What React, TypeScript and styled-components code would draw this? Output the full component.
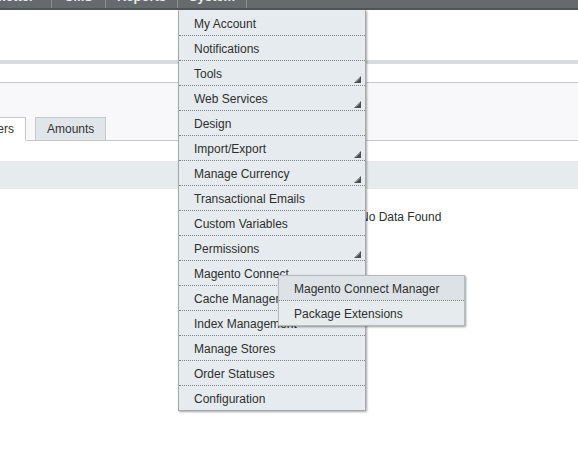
import React from "react";
import styled, { createGlobalStyle } from "styled-components";

const GlobalStyle = createGlobalStyle`
  html, body {
    margin: 0;
    padding: 0;
    background: #ffffff;
  }
  body {
    font-family: "Liberation Sans", Arial, sans-serif;
    font-size: 12px;
    color: #2f2f2f;
    overflow: hidden;
  }
`;

const Page = styled.div`
  position: relative;
  width: 578px;
  height: 461px;
  overflow: hidden;
`;

// Top navigation, scrolled so only the bottom of the labels shows
const NavBar = styled.div`
  display: flex;
  height: 8px;
  background: #656b6c;
  border-bottom: 2px solid #4f5557;
  overflow: hidden;
`;

const NavItem = styled.div<{ $width: number; $cut?: boolean }>`
  width: ${(p) => p.$width}px;
  flex: none;
  display: flex;
  justify-content: ${(p) => (p.$cut ? "flex-end" : "center")};
  padding-right: ${(p) => (p.$cut ? 17 : 0)}px;
  box-sizing: border-box;
  overflow: hidden;
  white-space: nowrap;
  border-right: 1px solid #8a9092;
  font-weight: bold;
  font-size: 13px;
  line-height: 14px;
  height: 22px;
  margin-top: -10px;
  color: #e9ecec;
`;

const HeaderSpace = styled.div`
  height: 50px;
`;

const HeaderRule = styled.div`
  height: 4px;
  background: #d6dde0;
`;

const StoreBar = styled.div`
  height: 18px;
  border-bottom: 1px solid #c6c6c6;
`;

const TabArea = styled.div`
  height: 34px;
  padding-top: 23px;
  background: #f8f8fa;
  display: flex;
  align-items: flex-end;
  border-bottom: 1px solid #c8c8c8;
`;

const TabsRow = styled.div`
  display: flex;
  gap: 9px;
  margin-left: -56px;
  margin-bottom: -1px;
`;

const Tab = styled.div<{ $active?: boolean }>`
  height: 22px;
  line-height: 22px;
  padding: 0 11px;
  border: 1px solid ${(p) => (p.$active ? "#c8c8c8" : "#c3c9cc")};
  border-bottom-color: ${(p) => (p.$active ? "#ffffff" : "#c8c8c8")};
  background: ${(p) => (p.$active ? "#ffffff" : "#dfe5e8")};
  color: #333;
`;

const GridGap = styled.div`
  height: 20px;
`;

const GridHeading = styled.div`
  height: 28px;
  background: #e6ebee;
`;

const EmptyRow = styled.div`
  padding: 21px 0 0 360px;
  line-height: 14px;
  color: #2f2f2f;
`;

// Dropdown menu
const Dropdown = styled.ul`
  position: absolute;
  left: 178px;
  top: 10px;
  width: 186px;
  margin: 0;
  padding: 0;
  list-style: none;
  background: #e5ebee;
  border: 1px solid #a3a9ac;
  border-top: 1px solid #e5ebee;
  box-shadow: 1px 1px 2px rgba(0, 0, 0, 0.35);
`;

const MenuItem = styled.li<{ $hover?: boolean }>`
  position: relative;
  height: 23px;
  padding-top: 1px;
  line-height: 25px;
  padding-left: 15px;
  border-bottom: 1px dotted #7f8588;
  background: ${(p) => (p.$hover ? "#dce2e5" : "transparent")};
  white-space: nowrap;

  &:last-child {
    border-bottom: none;
  }
`;

const Arrow = styled.svg`
  position: absolute;
  right: 4px;
  bottom: 2px;
`;

const SubMenu = styled.ul`
  position: absolute;
  left: 99px;
  top: 14px;
  width: 185px;
  margin: 0;
  padding: 0;
  list-style: none;
  background: #e6ebee;
  border: 1px solid #b4babd;
  box-shadow: 1px 1px 2px rgba(0, 0, 0, 0.4);
  z-index: 2;
`;

function SubArrow() {
  return (
    <Arrow width="7" height="7" viewBox="0 0 7 7">
      <polygon points="7,0 7,7 0,7" fill="#4a4f51" />
      <line x1="6" y1="2" x2="2" y2="6" stroke="#9aa0a2" strokeWidth="0.8" />
    </Arrow>
  );
}

const systemItems: { label: string; sub?: boolean }[] = [
  { label: "My Account" },
  { label: "Notifications" },
  { label: "Tools", sub: true },
  { label: "Web Services", sub: true },
  { label: "Design" },
  { label: "Import/Export", sub: true },
  { label: "Manage Currency", sub: true },
  { label: "Transactional Emails" },
  { label: "Custom Variables" },
  { label: "Permissions", sub: true },
  { label: "Magento Connect" },
  { label: "Cache Management" },
  { label: "Index Management" },
  { label: "Manage Stores" },
  { label: "Order Statuses" },
  { label: "Configuration" },
];

export default function App() {
  return (
    <Page>
      <GlobalStyle />
      <NavBar>
        <NavItem $width={52} $cut>
          Newsletter
        </NavItem>
        <NavItem $width={54}>CMS</NavItem>
        <NavItem $width={72}>Reports</NavItem>
        <NavItem $width={69}>System</NavItem>
      </NavBar>
      <HeaderSpace />
      <HeaderRule />
      <StoreBar />
      <TabArea>
        <TabsRow>
          <Tab $active>Customers</Tab>
          <Tab>Amounts</Tab>
        </TabsRow>
      </TabArea>
      <GridGap />
      <GridHeading />
      <EmptyRow>No Data Found</EmptyRow>

      <Dropdown>
        {systemItems.map((item) => (
          <MenuItem key={item.label}>
            {item.label}
            {item.sub && <SubArrow />}
            {item.label === "Magento Connect" && (
              <SubMenu>
                <MenuItem $hover>Magento Connect Manager</MenuItem>
                <MenuItem>Package Extensions</MenuItem>
              </SubMenu>
            )}
          </MenuItem>
        ))}
      </Dropdown>
    </Page>
  );
}
